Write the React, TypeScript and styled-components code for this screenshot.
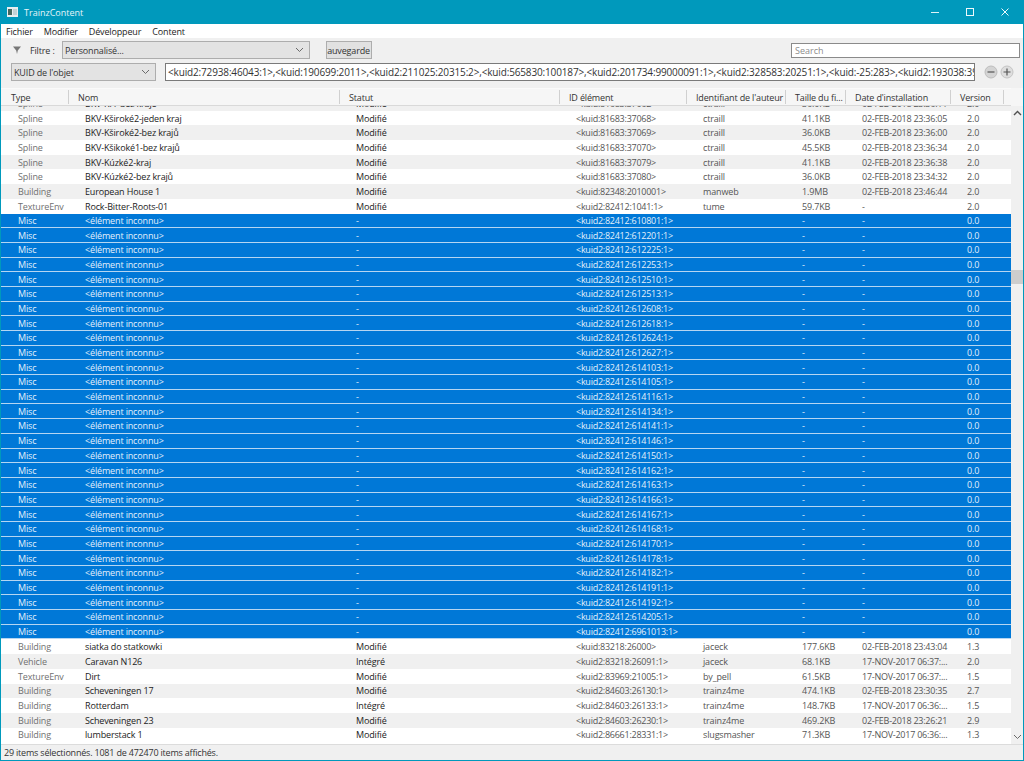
import React from "react";
import styled, { createGlobalStyle } from "styled-components";

const Global = createGlobalStyle`
  html, body { margin: 0; padding: 0; background: #fff; }
  * { box-sizing: border-box; }
`;

const COLS = "68px 271px 220px 127px 99px 60px 105px 53px 6px";
const FONT = `"Open Sans", "Noto Sans", "Liberation Sans", sans-serif`;

const Win = styled.div`
  width: 1024px;
  height: 761px;
  display: flex;
  flex-direction: column;
  overflow: hidden;
  border: 1px solid #0099bc;
  border-top: 0;
  background: #f0f0f0;
  font-family: ${FONT};
  font-size: 9px;
  letter-spacing: -0.15px;
  color: #222;
`;

const TitleBar = styled.div`
  height: 24px;
  flex: none;
  margin: 0 -1px;
  padding: 0 2px 0 7px;
  display: flex;
  align-items: center;
  background: #0099bc;
  color: #e6f5f9;
`;
const TitleText = styled.span`
  margin-left: 6px;
  font-size: 9px;
  letter-spacing: 0;
`;
const WinControls = styled.div`
  margin-left: auto;
  display: flex;
  height: 100%;
`;
const WinBtn = styled.div`
  width: 35px;
  display: flex;
  align-items: center;
  justify-content: center;
`;

const MenuBar = styled.div`
  height: 14px;
  flex: none;
  background: #fff;
  display: flex;
  align-items: center;
  gap: 11px;
  padding-left: 5px;
  color: #1c1c1c;
`;

const Toolbar = styled.div`
  height: 50px;
  flex: none;
  padding: 3px 3px 0 10px;
  display: flex;
  flex-direction: column;
  gap: 4px;
`;
const ToolRow = styled.div`
  height: 18px;
  display: flex;
  align-items: center;
`;
const Funnel = styled.svg`
  margin-left: 2px;
  width: 8px;
  height: 8px;
  flex: none;
`;
const FilterLabel = styled.span`
  margin-left: 9px;
  width: 32px;
  color: #333;
`;
const SelectBox = styled.div<{ $w: number }>`
  width: ${(p) => p.$w}px;
  height: 18px;
  flex: none;
  border: 1px solid #adadad;
  background: #e3e3e3;
  display: flex;
  align-items: center;
  justify-content: space-between;
  padding: 0 5px 0 2px;
  color: #333;
`;
const SaveButton = styled.div`
  margin-left: 16px;
  width: 46px;
  height: 18px;
  border: 1px solid #adadad;
  background: #e1e1e1;
  display: flex;
  align-items: center;
  justify-content: flex-end;
  overflow: hidden;
  white-space: nowrap;
  padding-right: 1px;
  color: #333;
`;
const SearchInput = styled.input`
  margin-left: auto;
  width: 229px;
  height: 15px;
  border: 1px solid #8a8a8a;
  background: #fff;
  padding: 0 3px;
  font: inherit;
  letter-spacing: 0;
  outline: 0;
  &::placeholder { color: #8d8d8d; opacity: 1; }
`;
const KuidInput = styled.div`
  margin-left: 9px;
  width: 810px;
  height: 18px;
  flex: none;
  border: 1px solid #7a7a7a;
  background: #fff;
  padding: 0 2px;
  display: flex;
  align-items: center;
  overflow: hidden;
  white-space: nowrap;
  font-size: 10px;
  color: #333;
`;
const RoundBtns = styled.div`
  margin-left: 9px;
  display: flex;
  gap: 2px;
`;
const RoundBtn = styled.svg`
  width: 14px;
  height: 14px;
  display: block;
`;

const Header = styled.div`
  height: 18px;
  flex: none;
  display: grid;
  grid-template-columns: ${COLS};
  background: #f6f6f6;
  border-top: 1px solid #fafafa;
  border-bottom: 1px solid #d9d9d9;
  margin-right: 12px;
  box-shadow: 12px 0 0 #f6f6f6;
`;
const HeadCell = styled.div`
  padding-left: 9px;
  display: flex;
  align-items: center;
  border-right: 1px solid #d0d0d0;
  margin: 1px 0;
  white-space: nowrap;
  overflow: hidden;
  color: #333;
  &:first-child { padding-left: 10px; }
  &:last-child { border-right: 0; }
`;

const Body = styled.div`
  flex: 1;
  min-height: 0;
  display: flex;
  background: #fff;
`;
const List = styled.div`
  flex: 1;
  overflow: hidden;
`;
const Rows = styled.div`
  margin-top: -10px;
`;
const Row = styled.div<{ $sel?: boolean; $alt?: boolean }>`
  height: 14.69px;
  display: grid;
  grid-template-columns: ${COLS};
  align-items: center;
  white-space: nowrap;
  background: ${(p) => (p.$sel ? "#0078d7" : p.$alt ? "#f0f0f0" : "#fff")};
  color: ${(p) => (p.$sel ? "#e4f0fb" : "#333")};
  border-bottom: ${(p) => (p.$sel ? "1px solid #b5d6f2" : "0")};
`;
const Cell = styled.div<{ $strong?: boolean; $muted?: boolean; $sel?: boolean; $tight?: boolean }>`
  padding-left: 16px;
  overflow: hidden;
  letter-spacing: ${(p) => (p.$tight ? "-0.25px" : "inherit")};
  color: ${(p) => (p.$sel ? "inherit" : p.$strong ? "#222" : p.$muted ? "#707070" : "#555")};
  &:first-child { padding-left: 17px; }
`;

const Scrollbar = styled.div`
  width: 12px;
  flex: none;
  background: #f0f0f0;
  position: relative;
  display: flex;
  flex-direction: column;
  justify-content: space-between;
  align-items: center;
  padding: 4px 0;
`;
const Thumb = styled.div`
  position: absolute;
  left: 0;
  right: 0;
  top: 164px;
  height: 14px;
  background: #cdcdcd;
`;
const StatusBar = styled.div`
  height: 16px;
  flex: none;
  border-top: 1px solid #dcdcdc;
  padding-left: 3px;
  display: flex;
  align-items: center;
  letter-spacing: -0.2px;
  color: #333;
`;

const Chevron = ({ up }: { up?: boolean }) => (
  <svg width="9" height="6" viewBox="0 0 9 6" fill="none" stroke={up ? "#505050" : "#6a6a6a"} strokeWidth={up ? 1.4 : 1}>
    <path d={up ? "M1 5l3.5-3.5L8 5" : "M1 1l3.5 3.5L8 1"} />
  </svg>
);

type R = [string, string, string, string, string, string, string, string];
const before: R[] = [
  ["Spline", "BKV-Kf1-bez kraje", "Modifié", "<kuid:81683:37062>", "ctraill", "36.0KB", "02-FEB-2018 23:36:11", "2.0"],
  ["Spline", "BKV-Kširoké2-jeden kraj", "Modifié", "<kuid:81683:37068>", "ctraill", "41.1KB", "02-FEB-2018 23:36:05", "2.0"],
  ["Spline", "BKV-Kširoké2-bez krajů", "Modifié", "<kuid:81683:37069>", "ctraill", "36.0KB", "02-FEB-2018 23:36:00", "2.0"],
  ["Spline", "BKV-Kšikoké1-bez krajů", "Modifié", "<kuid:81683:37070>", "ctraill", "45.5KB", "02-FEB-2018 23:36:34", "2.0"],
  ["Spline", "BKV-Kúzké2-kraj", "Modifié", "<kuid:81683:37079>", "ctraill", "41.1KB", "02-FEB-2018 23:36:38", "2.0"],
  ["Spline", "BKV-Kúzké2-bez krajů", "Modifié", "<kuid:81683:37080>", "ctraill", "36.0KB", "02-FEB-2018 23:34:32", "2.0"],
  ["Building", "European House 1", "Modifié", "<kuid:82348:2010001>", "manweb", "1.9MB", "02-FEB-2018 23:46:44", "2.0"],
  ["TextureEnv", "Rock-Bitter-Roots-01", "Modifié", "<kuid2:82412:1041:1>", "tume", "59.7KB", "-", "2.0"],
];
const miscIds = [
  610801, 612201, 612225, 612253, 612510, 612513, 612608, 612618, 612624, 612627, 614103, 614105, 614116, 614134,
  614141, 614146, 614150, 614162, 614163, 614166, 614167, 614168, 614170, 614178, 614182, 614191, 614192, 614205,
  6961013,
];
const misc: R[] = miscIds.map((id) => ["Misc", "<élément inconnu>", "-", `<kuid2:82412:${id}:1>`, "", "-", "-", "0.0"]);
const after: R[] = [
  ["Building", "siatka do statkowki", "Modifié", "<kuid:83218:26000>", "jaceck", "177.6KB", "02-FEB-2018 23:43:04", "1.3"],
  ["Vehicle", "Caravan N126", "Intégré", "<kuid2:83218:26091:1>", "jaceck", "68.1KB", "17-NOV-2017 06:37:...", "2.0"],
  ["TextureEnv", "Dirt", "Modifié", "<kuid2:83969:21005:1>", "by_pell", "61.5KB", "17-NOV-2017 06:37:...", "1.5"],
  ["Building", "Scheveningen 17", "Modifié", "<kuid2:84603:26130:1>", "trainz4me", "474.1KB", "02-FEB-2018 23:30:35", "2.7"],
  ["Building", "Rotterdam", "Intégré", "<kuid2:84603:26133:1>", "trainz4me", "148.7KB", "17-NOV-2017 06:36:...", "1.5"],
  ["Building", "Scheveningen 23", "Modifié", "<kuid2:84603:26230:1>", "trainz4me", "469.2KB", "02-FEB-2018 23:26:21", "2.9"],
  ["Building", "lumberstack 1", "Modifié", "<kuid2:86661:28331:1>", "slugsmasher", "71.3KB", "17-NOV-2017 06:36:...", "1.3"],
];
const rows = [...before, ...misc, ...after];
const heads = ["Type", "Nom", "Statut", "ID élément", "Identifiant de l'auteur", "Taille du fi...", "Date d'installation", "Version", ""];
const menus = ["Fichier", "Modifier", "Développeur", "Content"];
const kuids =
  "<kuid2:72938:46043:1>,<kuid:190699:2011>,<kuid2:211025:20315:2>,<kuid:565830:100187>,<kuid2:201734:99000091:1>,<kuid2:328583:20251:1>,<kuid:-25:283>,<kuid2:193038:39";

export default function App() {
  return (
    <Win>
      <Global />
      <TitleBar>
        <svg width="11" height="10" viewBox="0 0 11 10">
          <rect x="0" y="0" width="11" height="10" fill="#e8eef0" />
          <rect x="1" y="2" width="4" height="6" fill="#47685f" />
          <rect x="6" y="2" width="4" height="6" fill="#c3d2d6" />
        </svg>
        <TitleText>TrainzContent</TitleText>
        <WinControls>
          <WinBtn>
            <svg width="10" height="10" viewBox="0 0 10 10" stroke="#dff3f7" fill="none"><path d="M1 5.5h8" /></svg>
          </WinBtn>
          <WinBtn>
            <svg width="10" height="10" viewBox="0 0 10 10" stroke="#eef9fb" fill="none"><rect x="1.5" y="1.5" width="7" height="7" /></svg>
          </WinBtn>
          <WinBtn>
            <svg width="10" height="10" viewBox="0 0 10 10" stroke="#eef9fb" fill="none"><path d="M1.5 1.5l7 7M8.5 1.5l-7 7" /></svg>
          </WinBtn>
        </WinControls>
      </TitleBar>
      <MenuBar>
        {menus.map((m) => (
          <span key={m}>{m}</span>
        ))}
      </MenuBar>
      <Toolbar>
        <ToolRow>
          <Funnel viewBox="0 0 8 8"><path d="M0 0.5h8L4.8 4.5 4 8 3.2 4.5z" fill="#777" /></Funnel>
          <FilterLabel>Filtre :</FilterLabel>
          <SelectBox $w={248}>
            Personnalisé...
            <Chevron />
          </SelectBox>
          <SaveButton>auvegarde</SaveButton>
          <SearchInput placeholder="Search" readOnly />
        </ToolRow>
        <ToolRow>
          <SelectBox $w={145}>
            KUID de l'objet
            <Chevron />
          </SelectBox>
          <KuidInput>{kuids}</KuidInput>
          <RoundBtns>
            <RoundBtn viewBox="0 0 14 14">
              <circle cx="7" cy="7" r="6" fill="#d4d4d4" stroke="#bdbdbd" />
              <path d="M3.5 7h7" stroke="#555" strokeWidth="1.2" />
            </RoundBtn>
            <RoundBtn viewBox="0 0 14 14">
              <circle cx="7" cy="7" r="6" fill="#dedede" stroke="#c4c4c4" />
              <path d="M3.5 7h7M7 3.5v7" stroke="#555" strokeWidth="1.2" />
            </RoundBtn>
          </RoundBtns>
        </ToolRow>
      </Toolbar>
      <Header>
        {heads.map((h, i) => (
          <HeadCell key={i}>{h}</HeadCell>
        ))}
      </Header>
      <Body>
        <List>
          <Rows>
            {rows.map((r, i) => {
              const sel = r[0] === "Misc";
              return (
                <Row key={i} $sel={sel} $alt={i % 2 === 0}>
                  <Cell $sel={sel} $muted>{r[0]}</Cell>
                  <Cell $sel={sel} $strong>{r[1]}</Cell>
                  <Cell $sel={sel} $strong>{r[2]}</Cell>
                  <Cell $sel={sel} $tight>{r[3]}</Cell>
                  <Cell $sel={sel}>{r[4]}</Cell>
                  <Cell $sel={sel}>{r[5]}</Cell>
                  <Cell $sel={sel} $tight>{r[6]}</Cell>
                  <Cell $sel={sel}>{r[7]}</Cell>
                  <span />
                </Row>
              );
            })}
          </Rows>
        </List>
        <Scrollbar>
          <Chevron up />
          <Thumb />
          <Chevron />
        </Scrollbar>
      </Body>
      <StatusBar>29 items sélectionnés. 1081 de 472470 items affichés.</StatusBar>
    </Win>
  );
}
